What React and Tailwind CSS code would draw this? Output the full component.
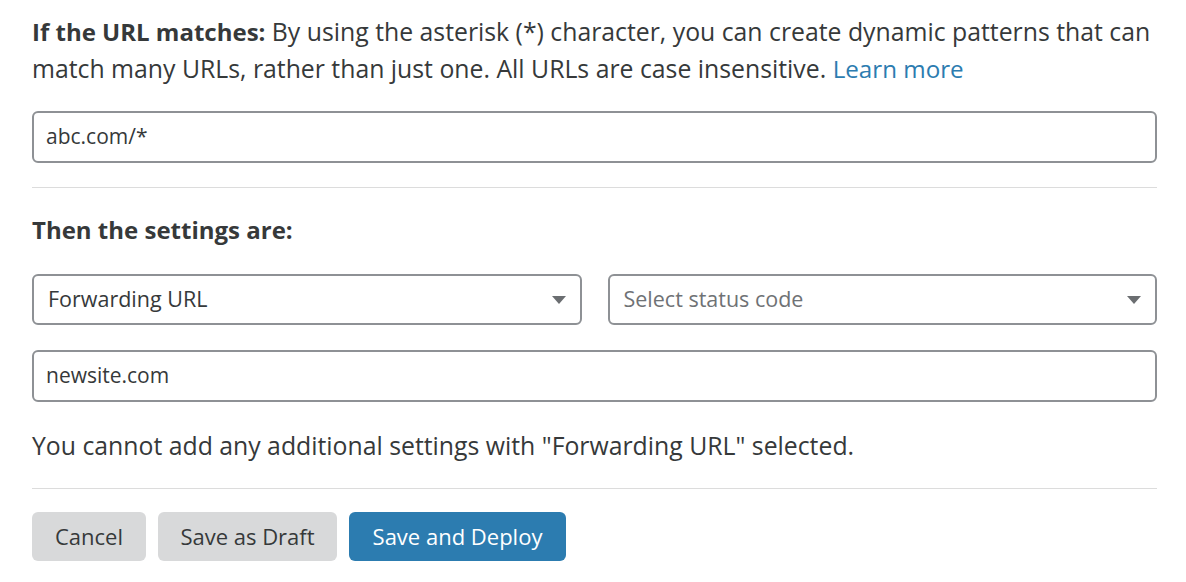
export default function App() {
  const font = { fontFamily: '"Open Sans", "Noto Sans", Arial, sans-serif' }
  const Caret = () => (
    <svg width="14" height="8" viewBox="0 0 14 8" className="shrink-0">
      <path d="M0 0 L14 0 L7 8 Z" fill="#6b6e71" />
    </svg>
  )

  return (
    <div className="w-[1186px] h-[582px] bg-white pl-8 pr-[29px] pt-[13px] text-[#36393a]" style={font}>
      {/* rule: URL match */}
      <p className="text-[24.8px] leading-[36px]">
        <span className="font-bold text-[24px]">If the URL matches:</span> By using the asterisk (*) character, you can create dynamic patterns that can match many URLs, rather than just one. All URLs are case insensitive.{" "}
        <a className="text-[#2c7cb0] text-[24.2px]">Learn more</a>
      </p>

      <div className="mt-[24px] h-[52px] border-2 border-[#8e9195] rounded-md flex items-center px-3 text-[21px]">
        abc.com/*
      </div>

      <div className="mt-[24px] border-t border-[#dcdcdc]" />

      {/* settings */}
      <h2 className="mt-[26px] text-[24px] leading-[32px] font-bold">Then the settings are:</h2>

      <div className="mt-[28px] flex gap-[26px]">
        <div className="flex-1 h-[51px] border-2 border-[#8e9195] rounded-md flex items-center justify-between pl-[14px] pr-[14px] text-[21.5px]">
          <span>Forwarding URL</span>
          <Caret />
        </div>
        <div className="flex-1 h-[51px] border-2 border-[#8e9195] rounded-md flex items-center justify-between pl-[14px] pr-[14px] text-[21.5px] text-[#6f7275]">
          <span>Select status code</span>
          <Caret />
        </div>
      </div>

      <div className="mt-[25px] h-[52px] border-2 border-[#8e9195] rounded-md flex items-center px-3 text-[21px]">
        newsite.com
      </div>

      <p className="mt-[25px] text-[24.8px] leading-[36px]">
        You cannot add any additional settings with "Forwarding URL" selected.
      </p>

      <div className="mt-[25px] border-t border-[#dcdcdc]" />

      <div className="mt-[23px] flex gap-3">
        <button className="w-[114px] h-[49px] rounded-md bg-[#d8d9da] text-[22px] text-[#36393a]">Cancel</button>
        <button className="w-[179px] h-[49px] rounded-md bg-[#d8d9da] text-[22px] text-[#36393a]">Save as Draft</button>
        <button className="w-[217px] h-[49px] rounded-md bg-[#2c7cb0] text-[22px] text-white">Save and Deploy</button>
      </div>
    </div>
  )
}
